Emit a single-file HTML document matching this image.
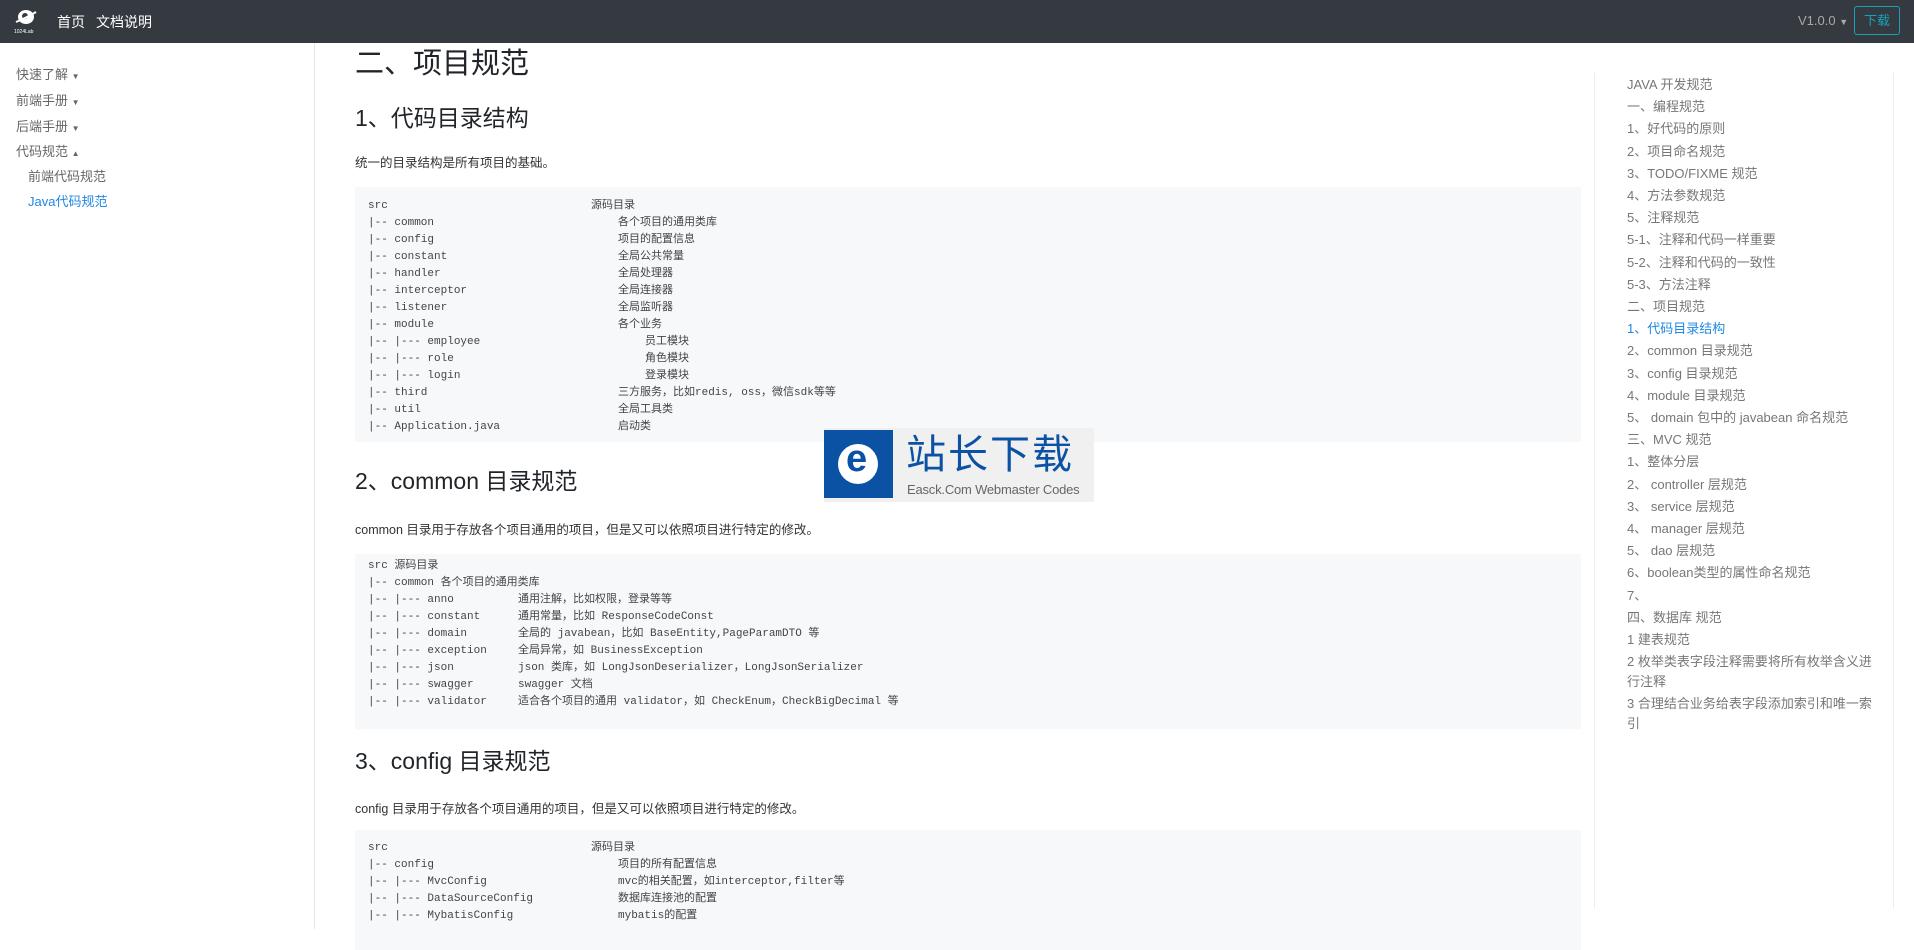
<!DOCTYPE html>
<html><head><meta charset="utf-8"><style>
*{margin:0;padding:0;box-sizing:border-box}
body{width:1914px;height:929px;overflow:hidden;background:#fff;font-family:"Liberation Sans","Noto Sans CJK SC",sans-serif;color:#333;position:relative}
.hd{position:absolute;left:0;top:0;width:1914px;height:43px;background:#343a40}
.hd .nav{position:absolute;top:12px;color:#fff;font-size:14px}
.side{position:absolute;left:0;top:43px;width:315px;height:886px;border-right:1px solid #e5e5e5}
.side div{position:absolute;font-size:13px;color:#666}
.c{position:absolute;left:355px;color:#212529}
h1.c{font-size:29px;font-weight:400}
h2.c{font-size:23px;font-weight:400}
p.c{font-size:12.5px;color:#333}
.pre{position:absolute;left:355px;width:1226px;background:#f6f8fa;font-family:"Liberation Mono","Noto Sans CJK SC",monospace;font-size:11px;color:#444;padding:0 0 0 13px}
.pre .l{height:17px;line-height:17px;white-space:pre;position:relative}
.pre .r{position:absolute;top:0}
.toc{position:absolute;left:1594px;top:73px;width:300px;height:836px;border-left:1px solid #eee;border-right:1px solid #eee}
.toc div{font-size:13px;color:#777;line-height:22.2px;padding-left:32px;width:278px}
</style></head><body>
<div class="hd">
<svg style="position:absolute;left:14px;top:8px" width="24" height="26" viewBox="0 0 24 26"><ellipse cx="12" cy="9" rx="8" ry="7" fill="#fff"/><circle cx="11" cy="8" r="3" fill="#343a40"/><path d="M2 14 Q12 10 22 4" stroke="#fff" stroke-width="2" fill="none"/><text x="0" y="25" font-size="5" fill="#fff" font-family="Liberation Sans">1024Lab</text></svg>
<div class="nav" style="left:57px">首页</div><div class="nav" style="left:96px">文档说明</div>
<div style="position:absolute;left:1798px;top:13px;color:#aaa;font-size:13px">V1.0.0 <span style="font-size:9px">▼</span></div>
<div style="position:absolute;left:1854px;top:6px;width:46px;height:29px;border:1px solid #17a2b8;border-radius:3px;color:#17a2b8;font-size:13px;text-align:center;line-height:27px">下载</div>
</div>
<div class="side">
<div style="left:16px;top:21px">快速了解 <span style="font-size:8px">▼</span></div>
<div style="left:16px;top:47px">前端手册 <span style="font-size:8px">▼</span></div>
<div style="left:16px;top:73px">后端手册 <span style="font-size:8px">▼</span></div>
<div style="left:16px;top:98px">代码规范 <span style="font-size:8px">▲</span></div>
<div style="left:28px;top:123px">前端代码规范</div>
<div style="left:28px;top:148px;color:#1e88e5">Java代码规范</div>
</div>
<h1 class="c" style="top:40px">二、项目规范</h1>
<h2 class="c" style="top:99px">1、代码目录结构</h2>
<p class="c" style="top:152px">统一的目录结构是所有项目的基础。</p>
<div class="pre" style="top:187px;height:255px;padding-top:11px">
<div class="l">src<span class="r" style="left:223px">源码目录</span></div>
<div class="l">|-- common<span class="r" style="left:250px">各个项目的通用类库</span></div>
<div class="l">|-- config<span class="r" style="left:250px">项目的配置信息</span></div>
<div class="l">|-- constant<span class="r" style="left:250px">全局公共常量</span></div>
<div class="l">|-- handler<span class="r" style="left:250px">全局处理器</span></div>
<div class="l">|-- interceptor<span class="r" style="left:250px">全局连接器</span></div>
<div class="l">|-- listener<span class="r" style="left:250px">全局监听器</span></div>
<div class="l">|-- module<span class="r" style="left:250px">各个业务</span></div>
<div class="l">|-- |--- employee<span class="r" style="left:277px">员工模块</span></div>
<div class="l">|-- |--- role<span class="r" style="left:277px">角色模块</span></div>
<div class="l">|-- |--- login<span class="r" style="left:277px">登录模块</span></div>
<div class="l">|-- third<span class="r" style="left:250px">三方服务，比如redis, oss，微信sdk等等</span></div>
<div class="l">|-- util<span class="r" style="left:250px">全局工具类</span></div>
<div class="l">|-- Application.java<span class="r" style="left:250px">启动类</span></div>
</div>
<h2 class="c" style="top:462px">2、common 目录规范</h2>
<p class="c" style="top:519px">common 目录用于存放各个项目通用的项目，但是又可以依照项目进行特定的修改。</p>
<div class="pre" style="top:554px;height:175px;padding-top:4px">
<div class="l">src 源码目录</div>
<div class="l">|-- common 各个项目的通用类库</div>
<div class="l">|-- |--- anno<span class="r" style="left:150px">通用注解，比如权限，登录等等</span></div>
<div class="l">|-- |--- constant<span class="r" style="left:150px">通用常量，比如 ResponseCodeConst</span></div>
<div class="l">|-- |--- domain<span class="r" style="left:150px">全局的 javabean，比如 BaseEntity,PageParamDTO 等</span></div>
<div class="l">|-- |--- exception<span class="r" style="left:150px">全局异常，如 BusinessException</span></div>
<div class="l">|-- |--- json<span class="r" style="left:150px">json 类库，如 LongJsonDeserializer，LongJsonSerializer</span></div>
<div class="l">|-- |--- swagger<span class="r" style="left:150px">swagger 文档</span></div>
<div class="l">|-- |--- validator<span class="r" style="left:150px">适合各个项目的通用 validator，如 CheckEnum，CheckBigDecimal 等</span></div>
</div>
<h2 class="c" style="top:742px">3、config 目录规范</h2>
<p class="c" style="top:798px">config 目录用于存放各个项目通用的项目，但是又可以依照项目进行特定的修改。</p>
<div class="pre" style="top:830px;height:120px;padding-top:10px">
<div class="l">src<span class="r" style="left:223px">源码目录</span></div>
<div class="l">|-- config<span class="r" style="left:250px">项目的所有配置信息</span></div>
<div class="l">|-- |--- MvcConfig<span class="r" style="left:250px">mvc的相关配置，如interceptor,filter等</span></div>
<div class="l">|-- |--- DataSourceConfig<span class="r" style="left:250px">数据库连接池的配置</span></div>
<div class="l">|-- |--- MybatisConfig<span class="r" style="left:250px">mybatis的配置</span></div>
</div>
<div class="toc"><div style="height:1px"></div>
<div>JAVA 开发规范</div><div>一、编程规范</div><div>1、好代码的原则</div><div>2、项目命名规范</div><div>3、TODO/FIXME 规范</div><div>4、方法参数规范</div><div>5、注释规范</div><div>5-1、注释和代码一样重要</div><div>5-2、注释和代码的一致性</div><div>5-3、方法注释</div><div>二、项目规范</div><div style="color:#1e88e5">1、代码目录结构</div><div>2、common 目录规范</div><div>3、config 目录规范</div><div>4、module 目录规范</div><div>5、 domain 包中的 javabean 命名规范</div><div>三、MVC 规范</div><div>1、整体分层</div><div>2、 controller 层规范</div><div>3、 service 层规范</div><div>4、 manager 层规范</div><div>5、 dao 层规范</div><div>6、boolean类型的属性命名规范</div><div>7、</div><div>四、数据库 规范</div><div>1 建表规范</div><div style="line-height:20px;padding-top:1px;padding-bottom:2px">2 枚举类表字段注释需要将所有枚举含义进行注释</div><div style="line-height:20px">3 合理结合业务给表字段添加索引和唯一索引</div>
</div>
<div style="position:absolute;left:824px;top:428px;width:270px;height:74px;background:#f0f0f0;white-space:nowrap">
<div style="position:absolute;left:0;top:2px;width:69px;height:68px;background:#0b52a5"></div>
<div style="position:absolute;left:14px;top:16px;width:40px;height:40px;border-radius:50%;background:#fff"></div>
<div style="position:absolute;left:22px;top:10px;color:#0b52a5;font-size:38px;font-weight:bold;font-family:'Liberation Sans',sans-serif">e</div>
<div style="position:absolute;left:82px;top:2px;color:#0b52a5;font-size:40px;letter-spacing:2px;line-height:50px">站长下载</div>
<div style="position:absolute;left:83px;top:54px;color:#666;font-size:13px;letter-spacing:-0.2px">Easck.Com Webmaster Codes</div>
</div>
</body></html>
